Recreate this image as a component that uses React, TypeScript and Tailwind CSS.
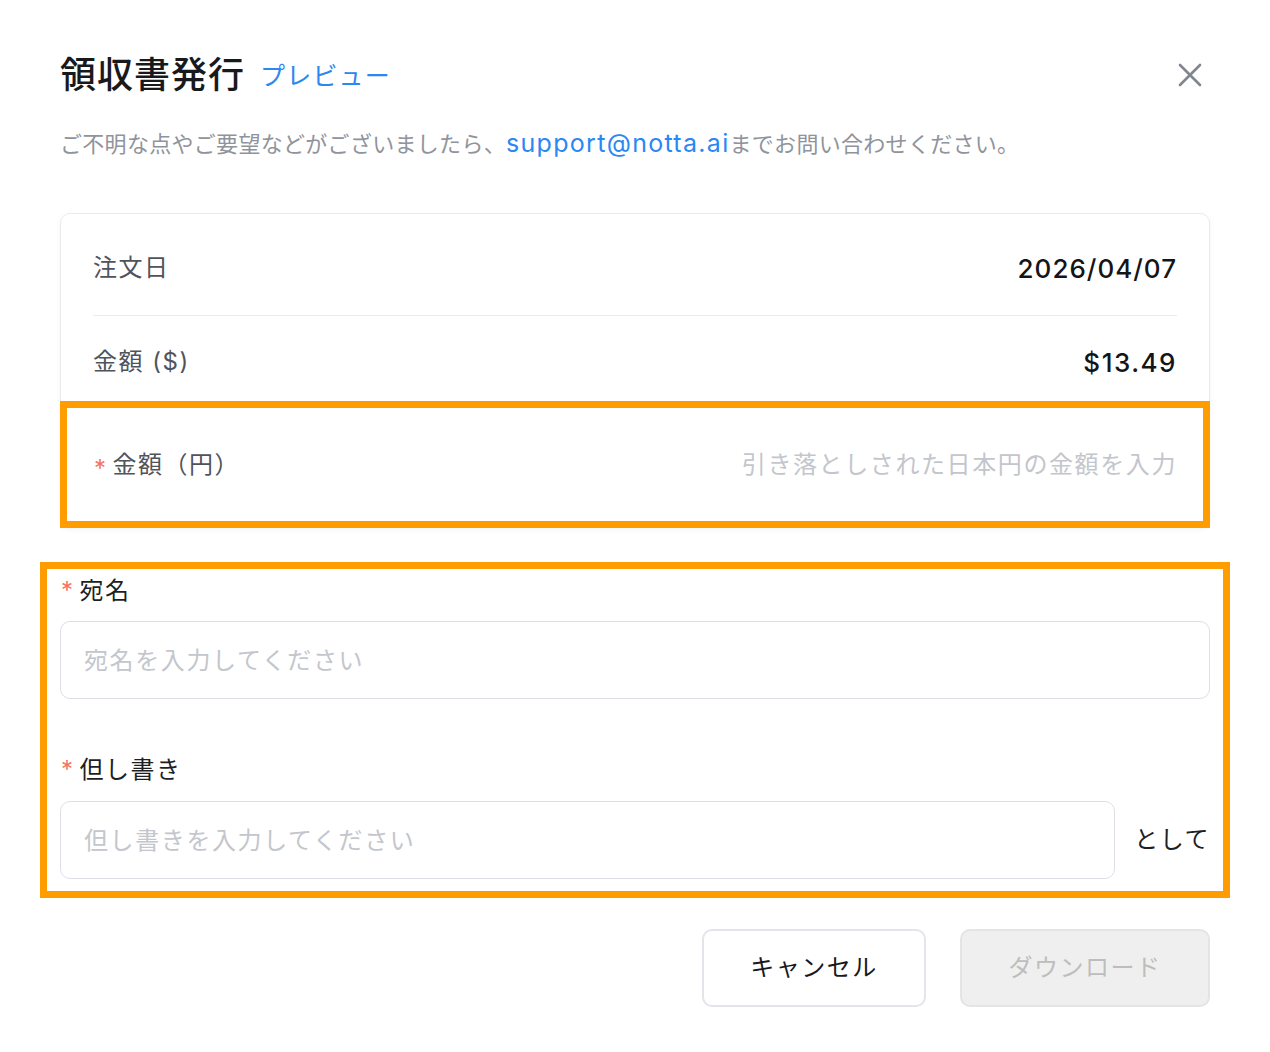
import { type ReactNode } from "react";

const FONT = { fontFamily: 'Inter, "Noto Sans CJK JP", sans-serif' };

function Star() {
  return <span className="mr-[5px] translate-y-[4px] text-[24px] leading-none text-[#f5735f]">*</span>;
}

function Label({ children }: { children: ReactNode }) {
  return (
    <div className="flex h-[32px] items-center text-[24px] leading-[32px] tracking-[1.5px] text-[#1d1f23]">
      <span className="ml-[1px]">
        <Star />
      </span>
      {children}
    </div>
  );
}

function TextInput({ placeholder, className = "" }: { placeholder: string; className?: string }) {
  return (
    <input
      placeholder={placeholder}
      style={FONT}
      className={`h-[78px] rounded-[10px] border border-[#dcdfe6] bg-white px-[23px] text-[24px] tracking-[1.6px] text-[#1d1f23] outline-none placeholder:text-[#c3c6cc] ${className}`}
    />
  );
}

export default function App() {
  return (
    <div style={FONT} className="min-h-[1052px] w-[1270px] bg-white px-[60px] pt-[50px]">
      {/* header */}
      <div className="flex h-[50px] items-center justify-between">
        <div className="flex items-center gap-[15px]">
          <h1 className="text-[36px] font-medium leading-none tracking-[1px] text-[#18191c]">領収書発行</h1>
          <a className="mt-[2px] text-[25px] leading-none tracking-[1.2px] text-[#2b87f2]">プレビュー</a>
        </div>
        <button className="mr-[8px] flex h-[24px] w-[24px] items-center justify-center">
          <svg width="24" height="24" viewBox="0 0 24 24" fill="none">
            <path d="M2 2L22 22M22 2L2 22" stroke="#80868e" strokeWidth="2.6" strokeLinecap="round" />
          </svg>
        </button>
      </div>

      <p className="mt-[28px] h-[30px] text-[22px] leading-[30px] tracking-[0.3px] text-[#8f949c]">
        ご不明な点やご要望などがございましたら、
        <span className="text-[25px] tracking-[1.3px] text-[#2b87f2]">support@notta.ai</span>
        までお問い合わせください。
      </p>

      {/* order card */}
      <div className="mt-[55px] rounded-[10px] border border-[#ebebeb] shadow-[0_2px_6px_rgba(0,0,0,0.04)]">
        <div className="px-[32px] pt-[7px]">
          <div className="flex h-[94px] items-center justify-between text-[24px]">
            <span className="tracking-[1.5px] text-[#4f545b]">注文日</span>
            <span className="text-[26px] font-medium tracking-[1px] text-[#141518]">2026/04/07</span>
          </div>
          <div className="h-px bg-[#ebebeb]" />
          <div className="flex h-[85px] items-center justify-between pt-[7px] text-[24px]">
            <span className="tracking-[1.5px] text-[#4f545b]">金額 ($)</span>
            <span className="text-[26px] font-medium tracking-[1.5px] text-[#141518]">$13.49</span>
          </div>
        </div>
        <div className="-mx-px -mb-px flex h-[127px] items-center justify-between border-[7px] border-[#ff9c00] pl-[27px] pr-[26px] text-[24px]">
          <span className="flex items-center tracking-[1.5px] text-[#4f545b]">
            <Star />
            金額（円）
          </span>
          <input
            placeholder="引き落としされた日本円の金額を入力"
            style={FONT}
            className="w-[560px] bg-transparent text-right text-[24px] tracking-[1.6px] outline-none placeholder:text-[#c3c6cc]"
          />
        </div>
      </div>

      {/* recipient form */}
      <div className="-mx-[20px] mt-[34px] border-[7px] border-[#ff9c00] px-[13px] pb-[12px] pt-[6px]">
        <Label>宛名</Label>
        <TextInput placeholder="宛名を入力してください" className="mt-[14px] w-full" />
        <div className="mt-[55px]">
          <Label>但し書き</Label>
        </div>
        <div className="mt-[15px] flex items-center gap-[19px]">
          <TextInput placeholder="但し書きを入力してください" className="flex-1" />
          <span className="text-[24px] tracking-[1.5px] text-[#1d1f23]">として</span>
        </div>
      </div>

      {/* actions */}
      <div className="mt-[31px] flex justify-end gap-[34px]">
        <button className="h-[78px] w-[224px] rounded-[10px] border-2 border-[#e4e5ea] bg-white text-[24px] tracking-[1.5px] text-[#18191c]">
          キャンセル
        </button>
        <button
          disabled
          className="h-[78px] w-[250px] rounded-[10px] border-2 border-[#e4e4e6] bg-[#efefef] text-[24px] tracking-[1.5px] text-[#bdbdbd]"
        >
          ダウンロード
        </button>
      </div>
    </div>
  );
}
